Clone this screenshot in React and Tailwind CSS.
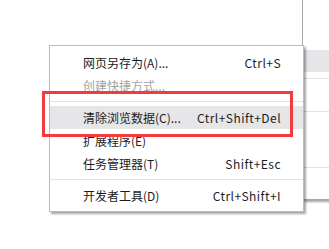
export default function App() {
  const font = { fontFamily: '"Noto Sans CJK SC", "Microsoft YaHei", sans-serif' };
  const Row = ({ label, shortcut, disabled, active }) => (
    <div
      className={`flex h-[23px] items-center justify-between pl-[33px] pr-[22px] text-[12px] ${
        active ? 'bg-[#e6e6e9]' : ''
      } ${disabled ? 'text-[#a3a3a3]' : 'text-[#1c1c1c]'}`}
    >
      <span>{label}</span>
      {shortcut && <span className="tracking-[0.45px]">{shortcut}</span>}
    </div>
  );
  const Sep = () => (
    <div className="flex h-[9px] items-center">
      <div className="h-px w-full bg-[#e3e3e3]" />
    </div>
  );
  return (
    <div className="relative h-[249px] w-[329px] overflow-hidden bg-white" style={font}>
      {/* outer (parent) menu */}
      <div className="absolute left-[302px] top-0 flex h-[200px] w-[60px] flex-col border-b border-l border-[#a8a8a8] bg-white shadow-[2px_2px_2px_rgba(0,0,0,0.35)]">
        <div className="h-[50px]" />
        <div className="h-[22px] bg-[#e6e6e9]" />
        <div className="h-[6px]" />
        <div className="h-px bg-[#e3e3e3]" />
        <div className="h-[32px]" />
        <div className="h-px bg-[#e3e3e3]" />
        <div className="h-[55px]" />
        <div className="h-px bg-[#e3e3e3]" />
      </div>

      {/* submenu */}
      <div className="absolute left-[49px] top-[45px] flex w-[255px] flex-col border border-[#bcbcbc] bg-white pb-[4px] pt-[5px] shadow-[2px_2px_2px_rgba(0,0,0,0.35)]">
        <Row label="网页另存为(A)..." shortcut="Ctrl+S" />
        <Row label="创建快捷方式..." disabled />
        <Sep />
        <Row label="清除浏览数据(C)..." shortcut="Ctrl+Shift+Del" active />
        <Row label="扩展程序(E)" />
        <Row label="任务管理器(T)" shortcut="Shift+Esc" />
        <Sep />
        <Row label="开发者工具(D)" shortcut="Ctrl+Shift+I" />
      </div>

      {/* red highlight box */}
      <div className="pointer-events-none absolute left-[42px] top-[91px] h-[46px] w-[251px] border-[3px] border-[#f23c3c]" />
    </div>
  );
}
